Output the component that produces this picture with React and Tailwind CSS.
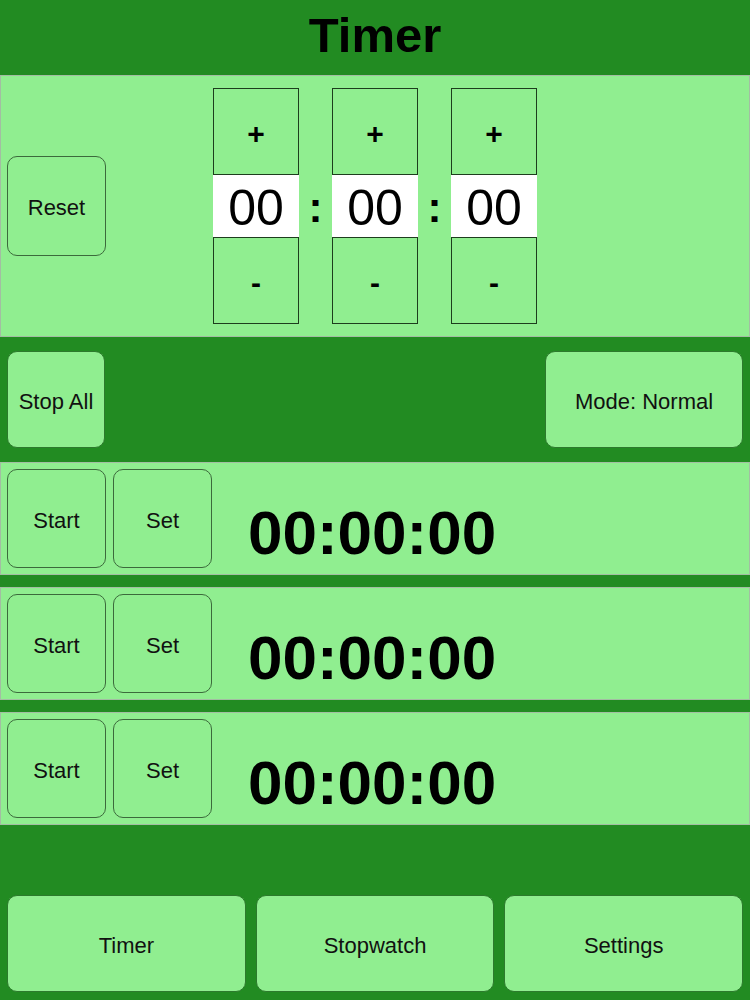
const font = { fontFamily: '"Liberation Sans", Arial, Helvetica, sans-serif' };

const Picker = () => (
  <div className="flex flex-col w-[86px]">
    <button className="h-[87px] border border-[#1d3d1d] bg-[#90ee90] text-[30px] font-bold text-black leading-none pt-[4px]">
      +
    </button>
    <div className="h-[62px] bg-white flex items-center justify-center text-[50px] text-black leading-none pt-[4px]">
      00
    </div>
    <button className="h-[87px] border border-[#1d3d1d] bg-[#90ee90] text-[30px] font-bold text-black leading-none pt-[4px]">
      -
    </button>
  </div>
);

const Colon = () => (
  <div className="w-[33px] flex items-center justify-center text-[42px] font-bold text-black leading-none pt-[4px]">
    :
  </div>
);

const TimerRow = () => (
  <div className="h-[113px] bg-[#90ee90] border border-[#a3bda3] flex items-center px-[6px] gap-[7px]">
    <button className="w-[99px] h-[99px] rounded-[10px] border border-[#3c6a3c] text-[22px] text-[#111] pt-[3px]">
      Start
    </button>
    <button className="w-[99px] h-[99px] rounded-[10px] border border-[#3c6a3c] text-[22px] text-[#111] pt-[3px]">
      Set
    </button>
    <div className="ml-[29px] pt-[28px] text-[62px] font-bold leading-none text-black">
      00:00:00
    </div>
  </div>
);

export default function App() {
  return (
    <div className="w-[750px] h-[1000px] bg-[#228b22] flex flex-col overflow-hidden" style={font}>
      {/* header */}
      <div className="h-[75px] flex items-center justify-center pb-[5px]">
        <h1 className="text-[49px] font-bold text-black leading-none">Timer</h1>
      </div>

      {/* picker panel */}
      <div className="h-[262px] bg-[#90ee90] border border-[#a3bda3] flex items-center pl-[6px]">
        <button className="w-[99px] h-[100px] rounded-[10px] border border-[#3c6a3c] text-[22px] text-[#111] pt-[3px]">
          Reset
        </button>
        <div className="ml-[107px] flex">
          <Picker />
          <Colon />
          <Picker />
          <Colon />
          <Picker />
        </div>
      </div>

      {/* controls */}
      <div className="h-[125px] flex items-center justify-between px-[7px]">
        <button className="w-[98px] h-[97px] rounded-[10px] bg-[#90ee90] border border-[#2d7a2d] text-[22px] text-[#111] pt-[3px]">
          Stop All
        </button>
        <button className="w-[198px] h-[97px] rounded-[10px] bg-[#90ee90] border border-[#2d7a2d] text-[22px] text-[#111] pt-[3px]">
          Mode: Normal
        </button>
      </div>

      {/* timers */}
      <div className="flex flex-col gap-[12px]">
        <TimerRow />
        <TimerRow />
        <TimerRow />
      </div>

      {/* bottom nav */}
      <div className="flex-1 flex items-end gap-[10px] px-[7px] pb-[8px]">
        <button className="flex-1 h-[97px] rounded-[10px] bg-[#90ee90] border border-[#2d7a2d] text-[22px] text-[#111] pt-[3px]">
          Timer
        </button>
        <button className="flex-1 h-[97px] rounded-[10px] bg-[#90ee90] border border-[#2d7a2d] text-[22px] text-[#111] pt-[3px]">
          Stopwatch
        </button>
        <button className="flex-1 h-[97px] rounded-[10px] bg-[#90ee90] border border-[#2d7a2d] text-[22px] text-[#111] pt-[3px]">
          Settings
        </button>
      </div>
    </div>
  );
}
